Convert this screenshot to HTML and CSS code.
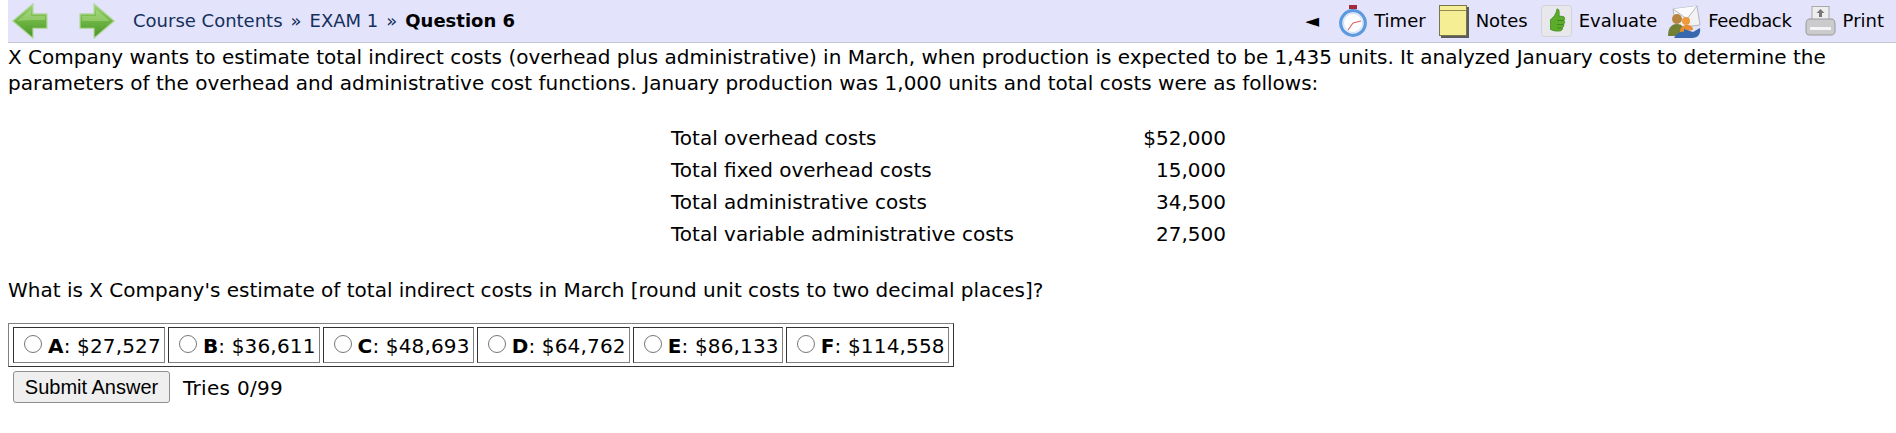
FILE: index.html
```html
<!DOCTYPE html>
<html lang="en">
<head>
<meta charset="utf-8">
<title>Question 6</title>
<link rel="stylesheet" href="styles.css">
</head>
<body>
<div class="nav">
  <div class="nav-left">
    <svg class="arrow" viewBox="0 0 36 36"><defs><linearGradient id="ga" x1="0" y1="0" x2="0" y2="1"><stop offset="0" stop-color="#9fd277"/><stop offset=".5" stop-color="#6eb544"/><stop offset="1" stop-color="#479325"/></linearGradient></defs><path d="M.7 18 21 .8v10h14v14.500H21v10z" fill="url(#ga)" stroke="#b6d8a0" stroke-width="1.200"/><path d="M5 18 19 6v7h14v4H19z" fill="#b6e08f" opacity=".45"/></svg>
    <svg class="arrow arrow-next" viewBox="0 0 36 36"><path d="M35.300 18 15 .8v10H1v14.500h14v10z" fill="url(#ga)" stroke="#b6d8a0" stroke-width="1.200"/><path d="M3 13h14V6l14 12H3z" fill="#b6e08f" opacity=".45"/></svg>
    <span class="crumbs"><a>Course Contents</a><span class="sep">»</span><a>EXAM 1</a><span class="sep">»</span><b>Question 6</b></span>
  </div>
  <div class="nav-right">
    <span class="collapse">◄</span>
    <span class="tool">
      <svg class="ic ic-timer" viewBox="0 0 28 32"><rect x="10" y="0" width="8" height="4" fill="#a32b3a"/><rect x="12" y="4" width="4" height="2" fill="#c8c8d8"/><circle cx="14" cy="18" r="12.300" fill="#f4f7fd" stroke="#5c9ae0" stroke-width="3.200"/><circle cx="14" cy="18" r="9.500" fill="#fff" stroke="#c9dcf4"/><path d="M14 18 9 25M14 18l8-2" stroke="#d8615d" stroke-width="1.100" fill="none"/></svg>
      Timer</span>
    <span class="tool">
      <svg class="ic ic-note" viewBox="0 0 30 33"><rect x="2" y="2" width="28" height="31" fill="#5b5b5b"/><rect x=".5" y=".5" width="27" height="30" fill="#f6ee94" stroke="#77764f"/><path d="M.5 5.500h27" stroke="#8f8a50"/></svg>
      Notes</span>
    <span class="tool">
      <svg class="ic ic-eval" viewBox="0 0 31 32"><rect x=".5" y=".5" width="30" height="31" rx="3" fill="#e8e8ec" stroke="#d2d2d8"/><path d="M16 4c2.500-.5 2.500 4 2 7l4 .5c2 .3 2 3 1 4 1 1.500 1 3-.5 3.500 .8 1.500 0 3-1 3.500 .2 2-1 3.500-3 3.500h-4c-2 0-3-1-5-1.500v-10c3-2 5.500-5 6.500-10.500z" fill="#5cab2b" stroke="#3f8a1b" stroke-width=".8"/><path d="M16 15.500h7M16 19.500h6.500M16 23h5.500" stroke="#3f8a1b" stroke-width="1" fill="none"/></svg>
      Evaluate</span>
    <span class="tool tool-feed">
      <svg class="ic ic-feed" viewBox="0 0 33 33"><path d="M5 4 29 1l3 19-24 3z" fill="#f3f3f6" stroke="#b5b5bd"/><path d="M5 4 19 14 29 1" fill="#fbfbfd" stroke="#b5b5bd"/><circle cx="9" cy="14" r="5" fill="#b8853f"/><path d="M0 31c0-9 4-12 9-12s8 3 8 12z" fill="#727f35"/><circle cx="18" cy="16" r="4" fill="#ee9a3c"/><path d="M12 27c0-5 3-7 7-7s6 2 6 5z" fill="#e78e32"/><path d="M6 33c3-5 5-6 10-6v-3l9 3 7-4c1 6-2 10-8 10z" fill="#3768ad"/></svg>
      Feedback</span>
    <span class="tool">
      <svg class="ic ic-print" viewBox="0 0 31 30"><rect x="7" y="0.500" width="17" height="14" fill="#eee" stroke="#a8a8a8"/><path d="M15.500 3l-4 4h8z" fill="#777"/><rect x="14" y="7" width="3" height="4" fill="#777"/><path d="M4 13h23c2 0 3 3 3 5v7c0 3-2 4-4 4H5c-3 0-4-1-4-4v-7c0-2 1-5 3-5z" fill="#cbcbcd" stroke="#9a9a9c"/><rect x="5" y="21" width="21" height="3" fill="#f5f5f5"/></svg>
      Print</span>
  </div>
</div>
<p class="prompt">X Company wants to estimate total indirect costs (overhead plus administrative) in March, when production is expected to be 1,435 units. It analyzed January costs to determine the parameters of the overhead and administrative cost functions. January production was 1,000 units and total costs were as follows:</p>
<div class="costs">
  <div class="cost-row"><span>Total overhead costs</span><span>$52,000</span></div>
  <div class="cost-row"><span>Total fixed overhead costs</span><span>15,000</span></div>
  <div class="cost-row"><span>Total administrative costs</span><span>34,500</span></div>
  <div class="cost-row"><span>Total variable administrative costs</span><span>27,500</span></div>
</div>
<p class="ask">What is X Company's estimate of total indirect costs in March [round unit costs to two decimal places]?</p>
<table class="choices">
  <tr>
    <td><label class="choice"><input type="radio" name="a"><span><b>A</b>: $27,527</span></label></td>
    <td><label class="choice"><input type="radio" name="a"><span><b>B</b>: $36,611</span></label></td>
    <td><label class="choice"><input type="radio" name="a"><span><b>C</b>: $48,693</span></label></td>
    <td><label class="choice"><input type="radio" name="a"><span><b>D</b>: $64,762</span></label></td>
    <td><label class="choice"><input type="radio" name="a"><span><b>E</b>: $86,133</span></label></td>
    <td><label class="choice"><input type="radio" name="a"><span><b>F</b>: $114,558</span></label></td>
  </tr>
</table>
<div class="submit-row">
  <button class="submit" type="button">Submit Answer</button>
  <span class="tries">Tries 0/99</span>
</div>
</body>
</html>
```
FILE: styles.css
```css
html, body { margin: 0; background: #fff; }
body {
  padding: 0 8px;
  font-family: "DejaVu Sans", Verdana, sans-serif;
  font-size: 20px;
  line-height: 26px;
  color: #000;
  overflow: hidden;
}
.nav {
  height: 42px;
  margin-right: -8px;
  background: #e3e3fb;
  border-bottom: 1px solid #c8c8d0;
  display: flex;
  justify-content: space-between;
  align-items: center;
  font-size: 18px;
}
.nav-left, .nav-right, .tool { display: flex; align-items: center; }
.arrow { width: 36px; height: 36px; margin-left: 4px; flex: none; }
.arrow-next { margin-left: 31px; }
.crumbs { margin-left: 18px; color: #14305c; }
.crumbs b { color: #000; }
.sep { margin: 0 8px; }
.nav-right { padding-right: 12px; gap: 13px; }
.collapse { font-size: 18px; margin-right: 7px; }
.tool { gap: 7px; }
.tool-feed { letter-spacing: -.3px; margin-left: -2px; }
.ic { flex: none; }
.ic-timer { width: 28px; height: 32px; }
.ic-note { width: 30px; height: 33px; }
.ic-eval { width: 31px; height: 32px; }
.ic-feed { width: 33px; height: 33px; }
.ic-print { width: 31px; height: 30px; }
.prompt { margin: 1px 0 0; }
.costs { margin: 26px 0 0 663px; width: 555px; }
.cost-row { display: flex; justify-content: space-between; align-items: center; height: 32px; }
.ask { margin: 27px 0 0; }
.choices {
  margin-top: 20px;
  padding: 0 1px;
  border: 1px solid;
  border-color: #808080 #333 #333 #808080;
  border-spacing: 3px;
  border-collapse: separate;
}
.choices td {
  height: 34px;
  padding: 0 3px 0 10px;
  border: 1px solid;
  border-color: #333 #808080 #808080 #333;
  white-space: nowrap;
}
.choice { display: flex; align-items: center; gap: 6px; letter-spacing: .16px; }
.choice input { margin: 0 0 3px; width: 18px; height: 18px; }
.choice span { padding-top: 2px; }
.submit-row { display: flex; align-items: center; margin: 4px 0 0 5px; }
.submit {
  width: 157px;
  height: 32px;
  padding: 0;
  font-family: "Liberation Sans", Arial, sans-serif;
  font-size: 20px;
  background: #efefef;
  border: 1px solid #8f8f8f;
  border-radius: 3px;
  color: #000;
}
.tries { margin-left: 13px; letter-spacing: .3px; padding-top: 1px; }
```
